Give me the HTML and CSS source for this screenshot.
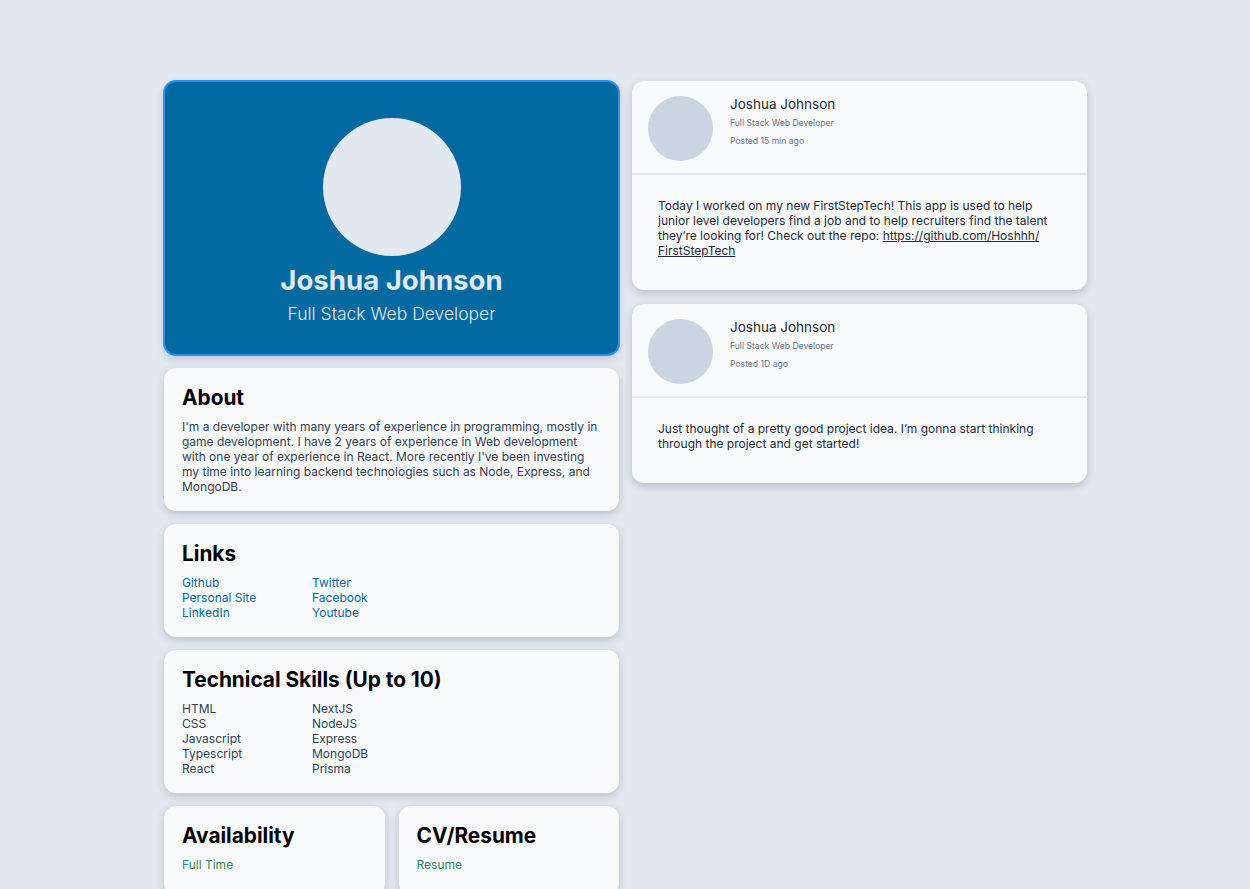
FILE: index.html
```html
<!DOCTYPE html>
<html lang="en">
<head>
<meta charset="utf-8">
<title>Joshua Johnson – Profile</title>
<link rel="stylesheet" href="styles.css">
</head>
<body>
<main class="page">
  <div class="layout">
    <section class="col-left">
      <div class="hero">
        <div class="hero-avatar"></div>
        <h1 class="hero-name">Joshua Johnson</h1>
        <p class="hero-role">Full Stack Web Developer</p>
      </div>

      <div class="card">
        <h2 class="card-title">About</h2>
        <p class="card-text">I'm a developer with many years of experience in programming, mostly in game development. I have 2 years of experience in Web development with one year of experience in React. More recently I've been investing my time into learning backend technologies such as Node, Express, and MongoDB.</p>
      </div>

      <div class="card">
        <h2 class="card-title">Links</h2>
        <div class="two-col">
          <a class="link" href="#">Github</a>
          <a class="link" href="#">Twitter</a>
          <a class="link" href="#">Personal Site</a>
          <a class="link" href="#">Facebook</a>
          <a class="link" href="#">LinkedIn</a>
          <a class="link" href="#">Youtube</a>
        </div>
      </div>

      <div class="card">
        <h2 class="card-title">Technical Skills (Up to 10)</h2>
        <div class="two-col skills">
          <span>HTML</span><span>NextJS</span>
          <span>CSS</span><span>NodeJS</span>
          <span>Javascript</span><span>Express</span>
          <span>Typescript</span><span>MongoDB</span>
          <span>React</span><span>Prisma</span>
        </div>
      </div>

      <div class="pair">
        <div class="card">
          <h2 class="card-title">Availability</h2>
          <p class="green">Full Time</p>
        </div>
        <div class="card">
          <h2 class="card-title">CV/Resume</h2>
          <a class="green" href="#">Resume</a>
        </div>
      </div>
    </section>

    <section class="col-right">
      <article class="post">
        <header class="post-head">
          <div class="post-avatar"></div>
          <div class="post-meta">
            <div class="post-name">Joshua Johnson</div>
            <div class="post-sub">Full Stack Web Developer</div>
            <div class="post-time">Posted 15 min ago</div>
          </div>
        </header>
        <p class="post-body">Today I worked on my new FirstStepTech! This app is used to help junior level developers find a job and to help recruiters find the talent they’re looking for! Check out the repo: <a class="post-link" href="#">https://github.com/Hoshhh/ FirstStepTech</a></p>
      </article>

      <article class="post">
        <header class="post-head">
          <div class="post-avatar"></div>
          <div class="post-meta">
            <div class="post-name">Joshua Johnson</div>
            <div class="post-sub">Full Stack Web Developer</div>
            <div class="post-time">Posted 1D ago</div>
          </div>
        </header>
        <p class="post-body">Just thought of a pretty good project idea. I’m gonna start thinking through the project and get started!</p>
      </article>
    </section>
  </div>
</main>
</body>
</html>
```

FILE: styles.css
```css
* { box-sizing: border-box; }

html, body {
  margin: 0;
  padding: 0;
  background: #e2e8f0;
  font-family: "Inter", "Noto Sans", "Liberation Sans", sans-serif;
  color: #334155;
}

.page {
  padding-top: 81px;
  padding-bottom: 40px;
}

.layout {
  width: 924px;
  margin: 0 auto;
  padding-left: 1px;
  display: grid;
  grid-template-columns: 455px 455px;
  column-gap: 13px;
  align-items: start;
}

.col-left {
  display: flex;
  flex-direction: column;
  gap: 13px;
}

.col-right {
  display: flex;
  flex-direction: column;
  gap: 14px;
}

/* hero */
.hero {
  background: #0369a1;
  border: 1px solid #2b92ee;
  box-shadow: 0 0 0 1px #2b92ee, 0 3px 8px rgba(15, 23, 42, 0.18);
  border-radius: 12px;
  padding: 36px 20px 26px;
  display: flex;
  flex-direction: column;
  align-items: center;
  color: #e2e8f0;
}

.hero-avatar {
  width: 138px;
  height: 138px;
  border-radius: 50%;
  background: #e2e8f0;
}

.hero-name {
  margin: 6px 0 0;
  font-size: 27.6px;
  line-height: 36px;
  font-weight: 700;
}

.hero-role {
  margin: 2px 0 0;
  font-size: 17.5px;
  line-height: 28px;
  font-weight: 300;
}

/* cards */
.card {
  background: #f8fafc;
  border-radius: 12px;
  box-shadow: 0 3px 8px rgba(15, 23, 42, 0.18);
  padding: 16px 18px 17px;
}

.card-title {
  margin: 0;
  font-size: 20.8px;
  line-height: 28px;
  font-weight: 700;
  color: #000;
}

.card-text {
  margin: 7px 0 0;
  font-size: 12px;
  line-height: 15px;
  color: #334155;
}

.two-col {
  margin-top: 7px;
  display: grid;
  grid-template-columns: 130px 1fr;
  font-size: 12px;
  line-height: 15px;
}

.link {
  color: #0369a1;
  text-decoration: none;
  justify-self: start;
}

.skills { color: #334155; }

.pair {
  display: grid;
  grid-template-columns: 1fr 1fr;
  column-gap: 14px;
}

.pair .card { padding-bottom: 24px; }

.green {
  display: block;
  margin: 7px 0 0;
  font-size: 12px;
  line-height: 15px;
  color: #2f855a;
  text-decoration: none;
}

/* posts */
.post {
  background: #f8fafc;
  border-radius: 12px;
  box-shadow: 0 3px 8px rgba(15, 23, 42, 0.2);
  overflow: hidden;
}

.post-head {
  display: flex;
  align-items: flex-start;
  padding: 15px 16px 12px;
  border-bottom: 2px solid #e2e8f0;
}

.post-avatar {
  width: 65px;
  height: 65px;
  flex: none;
  border-radius: 50%;
  background: #cbd5e1;
}

.post-meta {
  margin-left: 17px;
}

.post-name {
  font-size: 13.5px;
  line-height: 16px;
  color: #1e293b;
}

.post-sub,
.post-time {
  margin-top: 4px;
  font-size: 8.6px;
  line-height: 14px;
  color: #64748b;
}

.post-body {
  margin: 0;
  padding: 23px 34px 32px 26px;
  font-size: 12px;
  line-height: 15px;
  color: #1e293b;
}

.post-link {
  color: #1e293b;
  text-decoration: underline;
}
```
